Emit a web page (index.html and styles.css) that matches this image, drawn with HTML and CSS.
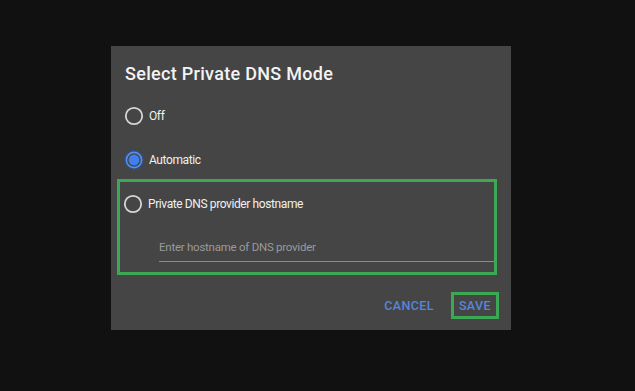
FILE: index.html
```html
<!DOCTYPE html>
<html lang="en">
<head>
  <title>Select Private DNS Mode</title>
  <link rel="stylesheet" href="styles.css">
</head>
<body>

  <!-- Private DNS dialog -->
  <div class="dialog">
    <h1 class="dialog-title">Select Private DNS Mode</h1>

    <div class="option">
      <svg class="radio" width="20" height="20" viewBox="0 0 20 20">
        <circle cx="10" cy="10" r="8.2" fill="none" stroke="#d6d6d6" stroke-width="1.8"/>
      </svg>
      <span>Off</span>
    </div>

    <div class="option option-auto">
      <svg class="radio" width="20" height="20" viewBox="0 0 20 20">
        <circle cx="10" cy="10" r="9.2" fill="none" stroke="#2f4f86" stroke-width="1.4"/>
        <circle cx="10" cy="10" r="7.6" fill="none" stroke="#5a8fe6" stroke-width="1.6"/>
        <circle cx="10" cy="10" r="5.4" fill="#3f7ff0"/>
      </svg>
      <span>Automatic</span>
    </div>

    <!-- highlighted hostname option -->
    <div class="highlight">
      <div class="option option-host">
        <svg class="radio" width="20" height="20" viewBox="0 0 20 20">
          <circle cx="10" cy="10" r="8.2" fill="none" stroke="#d6d6d6" stroke-width="1.8"/>
        </svg>
        <span>Private DNS provider hostname</span>
      </div>
      <div class="host-field">Enter hostname of DNS provider</div>
    </div>

    <div class="actions">
      <span class="action">CANCEL</span>
      <span class="action action-save">SAVE</span>
    </div>
  </div>

</body>
</html>
```

FILE: styles.css
```css
body {
  margin: 0;
  background-color: #111111;
  font-family: Roboto, "Liberation Sans", Arial, sans-serif;
}

.dialog {
  margin: 46px 0 0 111px;
  width: 400px;
  height: 284px;
  box-sizing: border-box;
  padding-top: 16px;
  background-color: #454545;
  display: flex;
  flex-direction: column;
}

.dialog-title {
  margin: 0 0 8px 14px;
  font-size: 18px;
  font-weight: 500;
  letter-spacing: 0.3px;
  line-height: 24px;
  color: #f3f3f3;
}

.option {
  display: flex;
  align-items: center;
  gap: 5px;
  height: 44px;
  padding-left: 13px;
  font-size: 12px;
  letter-spacing: -0.4px;
  color: #f0f0f0;
}

.option-auto {
  height: 41px;
  box-sizing: border-box;
  padding-top: 3px;
}

.radio {
  flex: none;
}

.highlight {
  margin-left: 6px;
  width: 380px;
  height: 96px;
  box-sizing: border-box;
  border: 3px solid #3da853;
}

.option-host {
  height: 43px;
  padding-left: 3px;
}

.host-field {
  margin: 13px 0 0 39px;
  padding-bottom: 5px;
  line-height: 18px;
  font-size: 11.5px;
  letter-spacing: -0.25px;
  color: #9a9a9a;
  border-bottom: 1px solid #8c8c8c;
}

.actions {
  display: flex;
  justify-content: flex-end;
  align-items: center;
  gap: 17px;
  margin: 17px 12px 0 0;
}

.action {
  font-size: 12.5px;
  font-weight: 500;
  letter-spacing: 0.4px;
  color: #5585df;
}

.action-save {
  border: 3px solid #3da853;
  padding: 0 5px;
  line-height: 21px;
}
```
